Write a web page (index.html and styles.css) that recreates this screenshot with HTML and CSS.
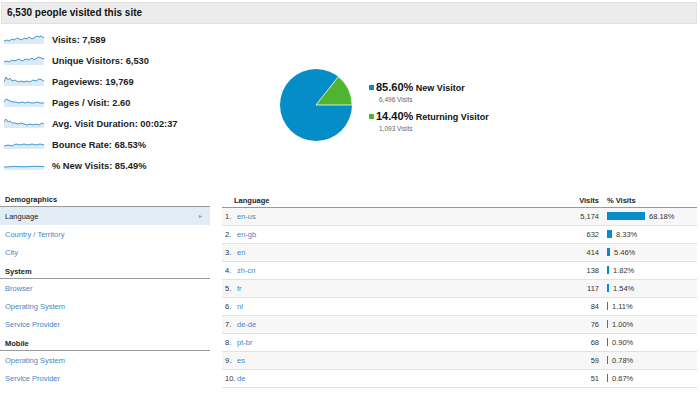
FILE: index.html
```html
<!DOCTYPE html>
<html lang="en">
<head>
    <meta charset="UTF-8">
    <title>Audience Overview</title>
    <link rel="stylesheet" href="styles.css">
</head>
<body>
    <div class="title-bar">6,530 people visited this site</div>

    <div class="overview">
        <ul class="metrics">
            <li class="metric">
                <svg class="spark" viewBox="0 0 40 10"><polygon class="spark-fill" points="0,7 3,6 5,7 8,5 10,6 13,4 15,5 18,6 20,4 23,5 25,3 28,5 30,4 33,2 35,3 37,2 40,4 40,10 0,10"/><polyline class="spark-line" points="0,7 3,6 5,7 8,5 10,6 13,4 15,5 18,6 20,4 23,5 25,3 28,5 30,4 33,2 35,3 37,2 40,4"/></svg>
                <span>Visits: 7,589</span>
            </li>
            <li class="metric">
                <svg class="spark" viewBox="0 0 40 10"><polygon class="spark-fill" points="0,7 3,6 5,7 8,5 10,6 13,5 15,4 18,6 20,5 23,4 25,5 28,3 30,5 33,3 35,2 37,3 40,4 40,10 0,10"/><polyline class="spark-line" points="0,7 3,6 5,7 8,5 10,6 13,5 15,4 18,6 20,5 23,4 25,5 28,3 30,5 33,3 35,2 37,3 40,4"/></svg>
                <span>Unique Visitors: 6,530</span>
            </li>
            <li class="metric">
                <svg class="spark" viewBox="0 0 40 10"><polygon class="spark-fill" points="0,6 2,1 4,4 6,2 8,5 11,4 14,6 17,5 20,6 23,5 26,6 29,4 32,5 35,3 38,4 40,5 40,10 0,10"/><polyline class="spark-line" points="0,6 2,1 4,4 6,2 8,5 11,4 14,6 17,5 20,6 23,5 26,6 29,4 32,5 35,3 38,4 40,5"/></svg>
                <span>Pageviews: 19,769</span>
            </li>
            <li class="metric">
                <svg class="spark" viewBox="0 0 40 10"><polygon class="spark-fill" points="0,5 2,2 4,3 6,4 9,5 12,5 15,6 18,5 21,6 24,5 27,6 30,6 33,5 36,6 40,6 40,10 0,10"/><polyline class="spark-line" points="0,5 2,2 4,3 6,4 9,5 12,5 15,6 18,5 21,6 24,5 27,6 30,6 33,5 36,6 40,6"/></svg>
                <span>Pages / Visit: 2.60</span>
            </li>
            <li class="metric">
                <svg class="spark" viewBox="0 0 40 10"><polygon class="spark-fill" points="0,4 2,1 4,4 6,3 8,5 11,5 14,6 17,5 20,6 23,7 26,6 29,7 32,6 35,7 38,5 40,6 40,10 0,10"/><polyline class="spark-line" points="0,4 2,1 4,4 6,3 8,5 11,5 14,6 17,5 20,6 23,7 26,6 29,7 32,6 35,7 38,5 40,6"/></svg>
                <span>Avg. Visit Duration: 00:02:37</span>
            </li>
            <li class="metric">
                <svg class="spark" viewBox="0 0 40 10"><polygon class="spark-fill" points="0,7 4,6 8,7 12,5 16,6 20,5 24,6 28,5 32,6 36,5 40,6 40,10 0,10"/><polyline class="spark-line" points="0,7 4,6 8,7 12,5 16,6 20,5 24,6 28,5 32,6 36,5 40,6"/></svg>
                <span>Bounce Rate: 68.53%</span>
            </li>
            <li class="metric">
                <svg class="spark" viewBox="0 0 40 10"><polygon class="spark-fill" points="0,7 10,6.5 20,6.8 30,6.3 40,6.6 40,10 0,10"/><polyline class="spark-line" points="0,7 10,6.5 20,6.8 30,6.3 40,6.6"/></svg>
                <span>% New Visits: 85.49%</span>
            </li>
        </ul>

        <svg class="pie" viewBox="0 0 72 72">
            <circle cx="36" cy="36" r="36" fill="#058dc7"/>
            <path d="M36,36 L72,36 A36,36 0 0,0 58.25,7.7 Z" fill="#50b432" stroke="#fff" stroke-width="0.8"/>
        </svg>

        <div class="legend">
            <div class="legend-item">
                <div class="legend-title"><i class="swatch new"></i><b class="pct">85.60%</b> New Visitor</div>
                <div class="legend-sub">6,496 Visits</div>
            </div>
            <div class="legend-item">
                <div class="legend-title"><i class="swatch returning"></i><b class="pct">14.40%</b> Returning Visitor</div>
                <div class="legend-sub">1,093 Visits</div>
            </div>
        </div>
    </div>

    <div class="report">
        <div class="side-nav">
            <div class="nav-head">Demographics</div>
            <a class="nav-item active">Language <span class="arrow">&#9656;</span></a>
            <a class="nav-item">Country / Territory</a>
            <a class="nav-item">City</a>
            <div class="nav-head">System</div>
            <a class="nav-item">Browser</a>
            <a class="nav-item">Operating System</a>
            <a class="nav-item">Service Provider</a>
            <div class="nav-head">Mobile</div>
            <a class="nav-item">Operating System</a>
            <a class="nav-item">Service Provider</a>
        </div>

        <table class="data">
            <thead>
                <tr>
                    <th colspan="2" class="col-name">Language</th>
                    <th class="col-visits">Visits</th>
                    <th class="col-pct">% Visits</th>
                </tr>
            </thead>
            <tbody>
                <tr><td class="num">1.</td><td><a>en-us</a></td><td class="col-visits">5,174</td><td class="col-pct"><span class="bar" style="width:38px"></span>68.18%</td></tr>
                <tr><td class="num">2.</td><td><a>en-gb</a></td><td class="col-visits">632</td><td class="col-pct"><span class="bar" style="width:5px"></span>8.33%</td></tr>
                <tr><td class="num">3.</td><td><a>en</a></td><td class="col-visits">414</td><td class="col-pct"><span class="bar" style="width:3px"></span>5.46%</td></tr>
                <tr><td class="num">4.</td><td><a>zh-cn</a></td><td class="col-visits">138</td><td class="col-pct"><span class="bar" style="width:2px"></span>1.82%</td></tr>
                <tr><td class="num">5.</td><td><a>fr</a></td><td class="col-visits">117</td><td class="col-pct"><span class="bar" style="width:2px"></span>1.54%</td></tr>
                <tr><td class="num">6.</td><td><a>nl</a></td><td class="col-visits">84</td><td class="col-pct"><span class="bar" style="width:1px"></span>1.11%</td></tr>
                <tr><td class="num">7.</td><td><a>de-de</a></td><td class="col-visits">76</td><td class="col-pct"><span class="bar" style="width:1px"></span>1.00%</td></tr>
                <tr><td class="num">8.</td><td><a>pt-br</a></td><td class="col-visits">68</td><td class="col-pct"><span class="bar" style="width:1px"></span>0.90%</td></tr>
                <tr><td class="num">9.</td><td><a>es</a></td><td class="col-visits">59</td><td class="col-pct"><span class="bar" style="width:1px"></span>0.78%</td></tr>
                <tr><td class="num">10.</td><td><a>de</a></td><td class="col-visits">51</td><td class="col-pct"><span class="bar" style="width:1px"></span>0.67%</td></tr>
            </tbody>
        </table>
    </div>
</body>
</html>
```

FILE: styles.css
```css
* {
    margin: 0;
    padding: 0;
    box-sizing: border-box;
}

body {
    font-family: "Liberation Sans", Arial, sans-serif;
    color: #222;
    background: #fff;
    width: 700px;
    height: 396px;
    overflow: hidden;
}

.title-bar {
    margin: 2px 3px 0 1px;
    height: 22px;
    line-height: 20px;
    padding-left: 5px;
    background: #ececec;
    border: 1px solid #e2e2e2;
    font-size: 10px;
    font-weight: bold;
    color: #111;
}

/* overview: sparklines + pie */
.overview {
    display: flex;
    align-items: center;
    padding-top: 5px;
}

.metrics {
    list-style: none;
    width: 280px;
    padding-left: 4px;
}

.metric {
    display: flex;
    align-items: center;
    height: 21px;
    font-size: 9.3px;
    font-weight: bold;
    color: #222;
}

.spark {
    width: 40px;
    height: 10px;
    margin-right: 8px;
    margin-top: -1px;
}

.spark-fill {
    fill: #dceaf6;
}

.spark-line {
    fill: none;
    stroke: #3f9ad2;
    stroke-width: 1;
}

.pie {
    width: 72px;
    height: 72px;
    margin-top: 5px;
}

.legend {
    margin-left: 17px;
    margin-top: 14px;
}

.legend-item {
    height: 29px;
}

.legend-title {
    font-size: 9px;
    font-weight: bold;
    color: #111;
    white-space: nowrap;
    line-height: 13px;
}

.pct {
    font-size: 11px;
}

.swatch {
    display: inline-block;
    width: 5px;
    height: 5px;
    margin-right: 2px;
    vertical-align: 1px;
}

.swatch.new {
    background: #058dc7;
}

.swatch.returning {
    background: #50b432;
}

.legend-sub {
    font-size: 6.5px;
    color: #666;
    padding-left: 10px;
    line-height: 9px;
}

/* report: nav + table */
.report {
    display: flex;
    margin-top: 13px;
}

.side-nav {
    width: 210px;
    font-size: 7.5px;
}

.nav-head {
    height: 18px;
    padding: 6px 0 0 5px;
    line-height: 10px;
    font-weight: bold;
    color: #222;
    border-bottom: 1px solid #999;
}

.nav-item {
    display: flex;
    justify-content: space-between;
    height: 18px;
    line-height: 19px;
    padding: 0 8px 0 5px;
    color: #4a86c2;
}

.nav-item.active {
    background: #e1ecf5;
    color: #222;
}

.arrow {
    color: #999;
    font-size: 6px;
}

.data {
    width: 475px;
    margin-left: 12px;
    border-collapse: collapse;
    font-size: 7.5px;
    color: #333;
}

.data th {
    height: 18px;
    padding-top: 6px;
    line-height: 10px;
    text-align: left;
    font-weight: bold;
    color: #222;
    border-bottom: 1px solid #999;
}

.data th.col-name {
    padding-left: 12px;
}

.data td {
    height: 18px;
    padding: 1px 0 0;
    border-bottom: 1px solid #e2e2e2;
    white-space: nowrap;
}

.data tbody tr:nth-child(odd) {
    background: #f7f7f7;
}

.data td.num {
    width: 15px;
    padding-left: 3px;
}

.data a {
    color: #4a86c2;
}

.data .col-visits {
    width: 60px;
    text-align: right;
    padding-right: 8px;
}

.data th.col-visits {
    padding-right: 8px;
}

.data .col-pct {
    width: 90px;
}

.bar {
    display: inline-block;
    height: 8px;
    background: #058dc7;
    margin-right: 4px;
    vertical-align: -1px;
}
```
